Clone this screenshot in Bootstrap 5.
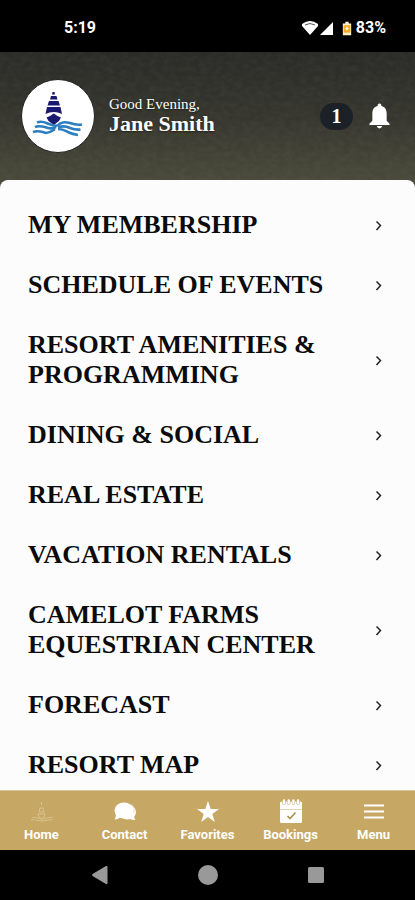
<!DOCTYPE html>
<html lang="en">
<head>
<meta charset="utf-8">
<meta name="viewport" content="width=device-width, initial-scale=1">
<title>Resort menu</title>
<link href="https://cdn.jsdelivr.net/npm/bootstrap@5.3.0/dist/css/bootstrap.min.css" rel="stylesheet">
<style>
body { font-family: Roboto, sans-serif; background: #000; }
.serif { font-family: "Liberation Serif", serif; }
.status { height: 52px; padding: 4px 29px 0 64px; font-size: 16px; line-height: 20px; }
.hero { height: 148px; padding: 0 25px 20px 21px; margin-bottom: -20px; background: linear-gradient(#2a2b27, #36362f 45%, #4a4a3b 88%); }
.grain { position: absolute; inset: 0; opacity: .06; }
.avatar { width: 74px; height: 74px; border: 1px solid #222; background: #fff; }
.greeting { font-size: 15px; line-height: 17px; }
.guest { font-size: 22px; line-height: 22px; }
.hero-text { text-shadow: 0 1px 2px #0008; padding: 0 0 2px 14px; }
.count { width: 33px; height: 27px; background: #1c2127; font-size: 20px; line-height: 20px; }
.sheet { background: #fcfcfc; border-radius: 8px 8px 0 0; padding-top: 15px; scrollbar-width: none; min-height: 0; }
.sheet::-webkit-scrollbar { display: none; }
.menu-row { padding: 15px 31px 15px 28px; color: #0b0b0b; font-size: 26px; line-height: 30px; }
.menu-row span { max-width: 300px; }
.tabs { height: 60px; background: #c6a763; border-top: 1px solid #d8c699; }
.tab-link { font-size: 13px; line-height: 16px; padding-top: 8px; gap: 2px; }
.system { height: 50px; gap: 84px; }
</style>
<script src="https://cdn.jsdelivr.net/npm/bootstrap@5.3.0/dist/js/bootstrap.bundle.min.js"></script>
</head>
<body class="vh-100 d-flex flex-column overflow-hidden">
<div class="status d-flex flex-shrink-0 align-items-center justify-content-between text-white fw-bold">
  <span>5:19</span>
  <div class="d-flex align-items-center">
    <svg width="32" height="16" viewBox="0 0 32 16" aria-hidden="true"><path d="M0 4Q8-2 16 4V6L8 15 0 6Z" fill="#fff"/><path d="M3 5Q8 2 13 5" fill="none" stroke="#555" stroke-width="1"/><path d="M31 2v13H18z" fill="#fff"/></svg>
    <svg class="ms-2" width="10" height="15" viewBox="0 0 12 16" aria-hidden="true"><path d="M4 0h4v2h3v14H1V2h3z" fill="#fff3d0"/><path d="M2 4h8v9H2z" fill="#f4ad20"/><path d="M4 8h4M6 6v4" stroke="#fff" stroke-width="1.500"/></svg>
    <span class="ms-1">83%</span>
  </div>
</div>
<header class="hero position-relative flex-shrink-0 d-flex align-items-center text-white serif">
  <svg class="grain w-100 h-100" aria-hidden="true"><filter id="g"><feTurbulence type="fractalNoise" baseFrequency=".14 .2" numOctaves="4" seed="3"/><feColorMatrix values="0 0 0 0 .4  0 0 0 0 .4  0 0 0 0 .3  1.800 0 0 0 -.5"/></filter><rect width="100%" height="100%" filter="url(#g)"/></svg>
  <div class="avatar rounded-circle position-relative flex-shrink-0">
    <svg width="72" height="72" viewBox="0 0 72 72" role="img" aria-label="Resort logo">
      <path d="M30.500 12h2l.5 2.500h-3zM29 16h5.500l1 3.500h-7.500zM27 21h9.500l1.500 4.500h-12.500zM25 27h13.500l1.500 7q-4-2-8.200-2t-8.300 2zM24.500 37.500l3.500-1.500 3.800-2.500 3.700 2.500 3.500 1.500-2 3.500-5.200 4-5.300-4z" fill="#19196f"/>
      <g fill="none" stroke="#2b7fc0" stroke-width="2.600">
        <path d="M15 42.500c5-2 8 0 12 1.500 3 1 5 1.500 8 2"/><path d="M13 47c5-2 9 0 13 1 3 1 5 .5 8-1"/><path d="M11 52c5-2 9 0 13 1 4 0 6-2 9-4"/>
        <path d="M35 46c5-5 9-4 13-3 4 1.500 8 2 12 1.500"/><path d="M36 47.500c5-2 8-1.500 12 .5 4 1.500 7 2 10.500 1.500"/><path d="M36 49c5 0 7 1.500 11 3.500 3 1.500 6 2 9 2.500"/>
      </g>
    </svg>
  </div>
  <div class="hero-text position-relative flex-grow-1">
    <div class="greeting">Good Evening,</div>
    <div class="guest fw-bold">Jane Smith</div>
  </div>
  <span class="count position-relative rounded-pill d-flex align-items-center justify-content-center fw-bold">1</span>
  <button class="btn p-0 border-0 text-white position-relative ms-3 d-flex" aria-label="Notifications">
    <svg width="21" height="26" viewBox="0 0 22 26" fill="currentColor"><path d="M11 0c1.500 0 2 1 2 2.500 4 1 5.500 4 5.500 8V18l3 3v1.500H.500V21l3-3v-7.500c0-4 1.500-7 5.500-8C9 1 9.500 0 11 0zM8 23.500h6q-1 2.500-3 2.500t-3-2.500z"/></svg>
  </button>
</header>
<main class="sheet serif fw-bold position-relative flex-grow-1 overflow-auto">
  <nav aria-label="Sections">
    <a href="#" class="menu-row d-flex align-items-center justify-content-between text-decoration-none"><span>MY MEMBERSHIP</span><svg width="10" height="14" viewBox="0 0 10 14" fill="none" stroke="#222" stroke-width="1.500"><path d="M2.500 3.500l4 4-4 4.500"/></svg></a>
    <a href="#" class="menu-row d-flex align-items-center justify-content-between text-decoration-none"><span>SCHEDULE OF EVENTS</span><svg width="10" height="14" viewBox="0 0 10 14" fill="none" stroke="#222" stroke-width="1.500"><path d="M2.500 3.500l4 4-4 4.500"/></svg></a>
    <a href="#" class="menu-row d-flex align-items-center justify-content-between text-decoration-none"><span>RESORT AMENITIES &amp; PROGRAMMING</span><svg width="10" height="14" viewBox="0 0 10 14" fill="none" stroke="#222" stroke-width="1.500"><path d="M2.500 3.500l4 4-4 4.500"/></svg></a>
    <a href="#" class="menu-row d-flex align-items-center justify-content-between text-decoration-none"><span>DINING &amp; SOCIAL</span><svg width="10" height="14" viewBox="0 0 10 14" fill="none" stroke="#222" stroke-width="1.500"><path d="M2.500 3.500l4 4-4 4.500"/></svg></a>
    <a href="#" class="menu-row d-flex align-items-center justify-content-between text-decoration-none"><span>REAL ESTATE</span><svg width="10" height="14" viewBox="0 0 10 14" fill="none" stroke="#222" stroke-width="1.500"><path d="M2.500 3.500l4 4-4 4.500"/></svg></a>
    <a href="#" class="menu-row d-flex align-items-center justify-content-between text-decoration-none"><span>VACATION RENTALS</span><svg width="10" height="14" viewBox="0 0 10 14" fill="none" stroke="#222" stroke-width="1.500"><path d="M2.500 3.500l4 4-4 4.500"/></svg></a>
    <a href="#" class="menu-row d-flex align-items-center justify-content-between text-decoration-none"><span>CAMELOT FARMS EQUESTRIAN CENTER</span><svg width="10" height="14" viewBox="0 0 10 14" fill="none" stroke="#222" stroke-width="1.500"><path d="M2.500 3.500l4 4-4 4.500"/></svg></a>
    <a href="#" class="menu-row d-flex align-items-center justify-content-between text-decoration-none"><span>FORECAST</span><svg width="10" height="14" viewBox="0 0 10 14" fill="none" stroke="#222" stroke-width="1.500"><path d="M2.500 3.500l4 4-4 4.500"/></svg></a>
    <a href="#" class="menu-row d-flex align-items-center justify-content-between text-decoration-none"><span>RESORT MAP</span><svg width="10" height="14" viewBox="0 0 10 14" fill="none" stroke="#222" stroke-width="1.500"><path d="M2.500 3.500l4 4-4 4.500"/></svg></a>
  </nav>
</main>
<nav class="tabs nav nav-fill flex-shrink-0 flex-nowrap fw-bold" aria-label="Main">
  <a href="#" class="tab-link col d-flex flex-column align-items-center text-white text-decoration-none"><svg width="26" height="26" viewBox="0 0 26 26" fill="none" stroke="#d9c391"><path d="M12.500 3v3M11 9h3l1 4h-5zM9 15h7l-1 3-2.500 2L10 18zM3 19c4-2 6 1 10 1s7-3 11-1M2 21c5-1 7 1 11 1s6-2 10-1"/></svg>Home</a>
  <a href="#" class="tab-link col d-flex flex-column align-items-center text-white text-decoration-none"><svg width="26" height="26" viewBox="0 0 26 26" fill="#fff"><ellipse cx="12" cy="11.500" rx="9.500" ry="8"/><ellipse cx="15.500" cy="13" rx="8.500" ry="7.500"/><path d="M4 15q0 3-1.500 5.500 4 0 6-2.500zM22 16q0 3 1.500 5-4 0-6-1.500z"/><path d="M19 5q5 4 2.500 9" fill="none" stroke="#e4d5b0" stroke-width=".7"/></svg>Contact</a>
  <a href="#" class="tab-link col d-flex flex-column align-items-center text-white text-decoration-none"><svg width="26" height="26" viewBox="0 0 26 26" fill="#fff"><path d="M13 2l2.700 8H24l-6.700 5 2.500 8L13 18l-6.800 5 2.500-8L2 10h8.300z"/></svg>Favorites</a>
  <a href="#" class="tab-link col d-flex flex-column align-items-center text-white text-decoration-none"><svg width="26" height="26" viewBox="0 0 26 26"><path d="M2 4q0-1.500 1.500-1.500h19Q24 2.500 24 4v18.500q0 1.500-1.500 1.500h-19Q2 24 2 22.500z" fill="#fff"/><path d="M6 2v2M10.700 2v2M15.400 2v2M20 2v2" stroke="#c6a763" stroke-width="3.400" stroke-linecap="round"/><path d="M6 1.500v2.500M10.700 1.500v2.500M15.400 1.500v2.500M20 1.500v2.500" stroke="#fff" stroke-width="2.400" stroke-linecap="round"/><path d="M2 10.500h22" stroke="#e4d5b0"/><path d="M9.500 17l2.500 2.500 5.500-6" fill="none" stroke="#a9914f" stroke-width="1.600"/></svg>Bookings</a>
  <a href="#" class="tab-link col d-flex flex-column align-items-center text-white text-decoration-none"><svg width="26" height="26" viewBox="0 0 26 26" stroke="#fff" stroke-width="2.200"><path d="M3 6.500h20M3 12.500h20M3 18.500h20"/></svg>Menu</a>
</nav>
<div class="system d-flex flex-shrink-0 align-items-center justify-content-center">
  <button class="btn p-0 border-0 d-flex" aria-label="Back"><svg width="24" height="24" viewBox="0 0 24 24" fill="#999"><path d="M18 3q1.500-.5 1.500 1v16q0 1.500-1.500 1L4.500 13q-1-1 0-2z"/></svg></button>
  <button class="btn p-0 border-0 d-flex" aria-label="Home screen"><svg width="24" height="24" viewBox="0 0 24 24" fill="#999"><circle cx="12" cy="12" r="10"/></svg></button>
  <button class="btn p-0 border-0 d-flex" aria-label="Recent apps"><svg width="24" height="24" viewBox="0 0 24 24" fill="#999"><rect x="4" y="4" width="16" height="16" rx="1.500"/></svg></button>
</div>
</body>
</html>
